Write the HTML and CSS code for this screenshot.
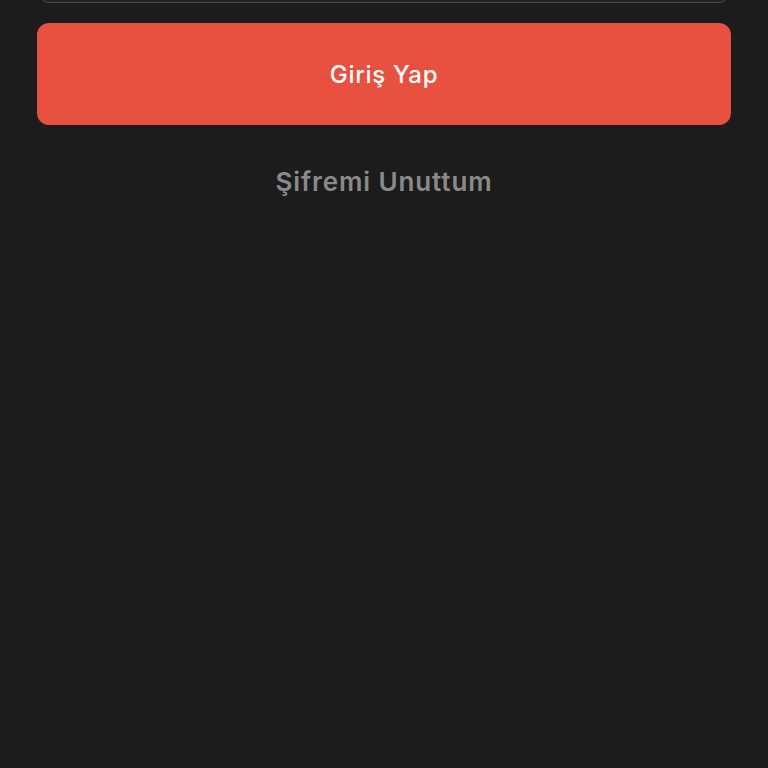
FILE: index.html
```html
<!DOCTYPE html>
<html lang="tr">
<head>
<meta charset="utf-8">
<link rel="stylesheet" href="styles.css">
</head>
<body>
<div class="form">
  <div class="field"></div>
  <button class="login">Giriş Yap</button>
  <a class="forgot">Şifremi Unuttum</a>
</div>
</body>
</html>
```
FILE: styles.css
```css
html, body {
  margin: 0;
  padding: 0;
  background: #1c1c1c;
  height: 100%;
}
body {
  font-family: Inter, "Noto Sans", sans-serif;
}
.form {
  display: flex;
  flex-direction: column;
  padding: 0 37px;
}
.field {
  height: 60px;
  margin-top: -59px;
  border: 1.5px solid #4a4a4a;
  border-radius: 12px;
  background: #222222;
}
.login {
  margin-top: 20px;
  height: 102px;
  border: none;
  border-radius: 12px;
  background: #e8503f;
  color: #ffffff;
  font-family: Inter, "Noto Sans", sans-serif;
  font-size: 24px;
  font-weight: 500;
  letter-spacing: 0.7px;
}
.forgot {
  margin-top: 42px;
  text-align: center;
  color: #8a8a8a;
  font-size: 26px;
  font-weight: 600;
  line-height: 30px;
  letter-spacing: 0.9px;
}
```
